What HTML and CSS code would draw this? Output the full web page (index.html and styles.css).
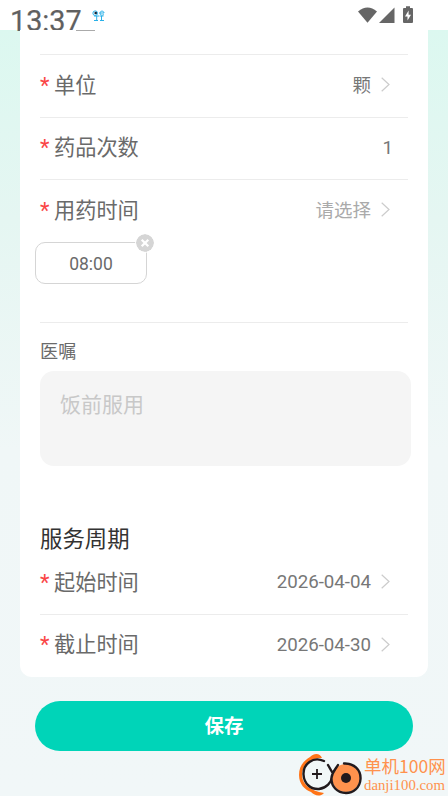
FILE: index.html
```html
<!DOCTYPE html>
<html lang="zh-CN">
<head>
<meta charset="utf-8">
<title>用药提醒</title>
<link rel="stylesheet" href="styles.css">
</head>
<body>
<header class="status">
  <span class="clock">13:37</span>
  <svg class="notice" width="14" height="12" viewBox="0 0 14 12" fill="none" stroke="#29b0e8" stroke-width="1"><circle cx="3.2" cy="3.2" r="2.3"/><path d="M7.500 3h4.500c0-2.500-4-2.500-4 0s2.500 2.500 4 1.500M2 6h5M4.700 6v5M2 10.500h4M7.500 6h4M9.500 6v5M8 10.500h4"/><circle cx="3.700" cy="3" r="1.300" fill="#123" stroke="none"/></svg>
  <svg class="signals" width="56" height="18" viewBox="0 0 56 18" fill="#666"><path d="M0 4.500Q9.500-3.500 19 4.500L9.500 15.800Z"/><path d="M21 16L36.500 .5V16Z"/><path d="M48-.8h4v1.800h2q1 0 1 1V15q0 1-1 1h-8q-1 0-1-1V2q0-1 1-1h2Z"/><path fill="#fff" d="M50.600 3.500L47 9.500h2.500v4L53 7.800h-2.400Z"/></svg>
</header>
<main class="page">
  <section class="card">
    <div class="cut"></div>
    <div class="row"><i class="star">*</i><span class="label">单位</span><span class="value cjk">颗</span><svg class="chevron" viewBox="0 0 9 15"><path d="M.7 .7L8 7.500L.7 14.300"/></svg></div>
    <div class="row"><i class="star">*</i><span class="label">药品次数</span><span class="value count">1</span></div>
    <div class="times">
      <div class="row plain"><i class="star">*</i><span class="label">用药时间</span><span class="value cjk hint">请选择</span><svg class="chevron" viewBox="0 0 9 15"><path d="M.7 .7L8 7.500L.7 14.300"/></svg></div>
      <div class="chip">08:00<svg class="remove" viewBox="0 0 18 18"><circle cx="9" cy="9" r="9" fill="#d5d5d5"/><path d="M5.700 5.700l6.600 6.600M12.300 5.700l-6.600 6.600" stroke="#fff" stroke-width="2.200"/></svg></div>
    </div>
    <div class="advice">医嘱</div>
    <div class="note">饭前服用</div>
    <h2 class="title">服务周期</h2>
    <div class="row"><i class="star">*</i><span class="label">起始时间</span><span class="value">2026-04-04</span><svg class="chevron" viewBox="0 0 9 15"><path d="M.7 .7L8 7.500L.7 14.300"/></svg></div>
    <div class="row plain"><i class="star">*</i><span class="label">截止时间</span><span class="value">2026-04-30</span><svg class="chevron" viewBox="0 0 9 15"><path d="M.7 .7L8 7.500L.7 14.300"/></svg></div>
  </section>
  <button class="save">保存</button>
</main>
<aside class="mark">
  <svg width="64" height="44" viewBox="0 0 64 44" fill="none">
    <path d="M24 6C22 1 16 1 12 5C5 9 1 15 1 23C1 32 7 38 13 40C17 44 22 45 26 41C12 39 4 32 4 23C4 14 11 6 24 6Z" fill="#ff7417"/>
    <path d="M26 9C15 4 5 12 5.500 22.500C6 32 13 37.500 21 37C29 36 33 30 34 26" stroke="#211a1d" stroke-width="2.400" stroke-linecap="round"/>
    <path d="M19 17v10M14 22h10" stroke="#211a1d" stroke-width="1.800"/>
    <circle cx="48" cy="26" r="14" fill="#ff924d"/>
    <path d="M46 11.500C56 11 63 18 62.500 27C62 36 55 41 48 41C39 41 33 34 33.500 26C34 20 37 18 40 13M30 13L34 20" stroke="#211a1d" stroke-width="2.400" stroke-linecap="round"/>
    <circle cx="48" cy="26" r="5" fill="#211a1d"/>
  </svg>
  <div class="brand"><b class="name">单机100网</b><span class="site">danji100.com</span></div>
</aside>
</body>
</html>
```

FILE: styles.css
```css
* { box-sizing: border-box; }
body {
  margin: 0;
  width: 448px;
  height: 796px;
  overflow: hidden;
  position: relative;
  background: linear-gradient(180deg, #dcf8f0 30px, #e5f6f2 220px, #f0f7f7 450px, #f1f7f8 100%);
  font-family: Roboto, "Noto Sans CJK SC", sans-serif;
  color: #6a6a6a;
}
.status {
  height: 30px;
  padding-left: 10px;
  background: #fff;
  display: flex;
  align-items: flex-start;
}
.clock { width: 82px; padding-top: 4px; font-size: 28.800px; line-height: 34px; height: 34px; color: #606060; -webkit-text-stroke: .2px #606060; }
.notice { margin-top: 10px; }
.signals { margin: 7px 0 0 252px; overflow: visible; }
.page { display: flex; flex-direction: column; }
.card {
  height: 647px;
  margin: 0 20px;
  padding: 0 20px;
  background: #fff;
  border-radius: 0 0 12px 12px;
}
.cut { height: 25px; border-bottom: 1px solid #ececec; position: relative; }
.cut::before { content: ""; position: absolute; left: 36px; top: 0; width: 19px; height: 1px; background: #aaa; }
.row { height: 62.500px; padding-right: 18px; display: flex; align-items: center; border-bottom: 1px solid #ececec; }
.plain { border-bottom-color: transparent; }
.star { width: 14px; color: #fa4646; font: normal 22px/24px Roboto, sans-serif; }
.label { flex: 1; font-size: 21.200px; line-height: 30px; }
.value { font-size: 18.700px; line-height: 24px; color: #777; margin-right: 10px; padding-bottom: 1px; }
.count { margin-right: -3px; }
.cjk { font-size: 18.500px; padding-bottom: 0; }
.hint { color: #aaa; }
.chevron { width: 9px; height: 15px; margin-bottom: 2px; fill: none; stroke: #ccc; stroke-width: 1.200; }
.times { height: 142.500px; border-bottom: 1px solid #ececec; }
.chip {
  position: relative;
  width: 112px;
  height: 42px;
  margin: -1px 0 0 -5px;
  border: 1px solid #d5d5d5;
  border-radius: 10px;
  font-size: 17.500px;
  line-height: 42px;
  text-align: center;
}
.remove { position: absolute; right: -8px; top: -9px; width: 18px; height: 18px; border-radius: 50%; box-shadow: 0 0 0 1px #fff; }
.advice { height: 48.500px; padding-top: 16px; font-size: 18.200px; line-height: 26px; }
.note { width: 371px; height: 95px; padding: 19px 20px; border-radius: 14px; background: #f5f5f5; color: #c8c8c8; font-size: 21px; line-height: 30px; }
.title { height: 86px; margin: 0; padding-top: 58px; font-size: 22.400px; line-height: 30px; font-weight: 400; color: #333; }
.save {
  height: 50px;
  margin: 24px 35px 0;
  border: 0;
  border-radius: 25px;
  background: #00d4b8;
  color: #fff;
  font: 700 19.500px/46px "Noto Sans CJK SC", sans-serif;
  padding: 0 0 2px;
}
.mark { position: absolute; left: 298px; top: 752px; display: flex; gap: 2px; }
.brand { display: flex; flex-direction: column; padding-top: 3px; color: #ff924d; white-space: nowrap; }
.name { font: 400 17.500px/22px "Noto Sans CJK SC", sans-serif; }
.site { font: 14.800px/16px "Liberation Serif", serif; }
```
